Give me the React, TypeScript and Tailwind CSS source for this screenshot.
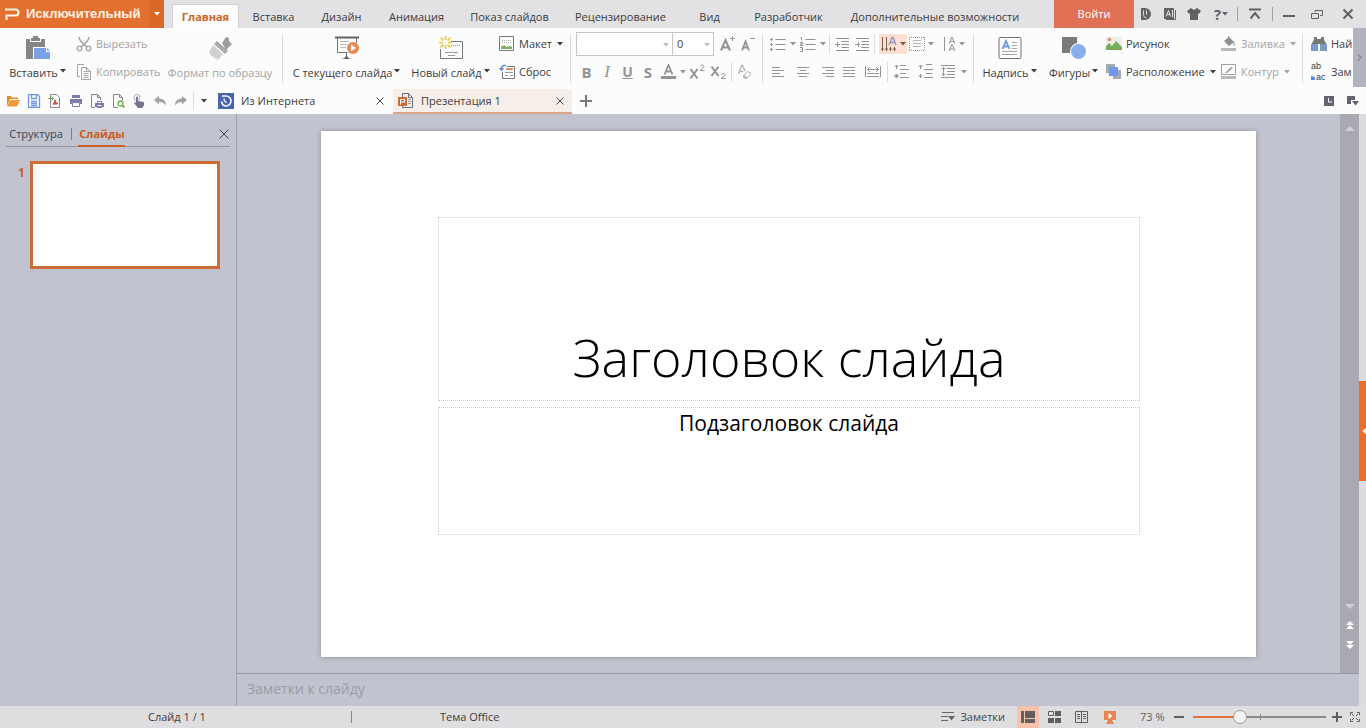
import type { ReactNode } from "react";
import clsx from "clsx";

const menuTabs = [
  { label: "Вставка", width: "w-[68px]" },
  { label: "Дизайн", width: "w-[68px]" },
  { label: "Анимация", width: "w-[82px]" },
  { label: "Показ слайдов", width: "w-[104px]" },
  { label: "Рецензирование", width: "w-[118px]" },
  { label: "Вид", width: "w-[60px]" },
  { label: "Разработчик", width: "w-[98px]" },
  { label: "Дополнительные возможности", width: "w-[195px]" },
];

function Svg({ w = 16, h = 16, children, className }: { w?: number; h?: number; children: ReactNode; className?: string }) {
  return (
    <svg width={w} height={h} viewBox={`0 0 ${w} ${h}`} fill="none" stroke="currentColor" className={clsx("shrink-0", className)} aria-hidden="true">
      {children}
    </svg>
  );
}

function Caret({ className }: { className?: string }) {
  return (
    <Svg w={8} h={4} className={className}>
      <path d="M1 0h6L4 3.5z" fill="currentColor" stroke="none" />
    </Svg>
  );
}

function Sep({ className }: { className?: string }) {
  return <span className={clsx("w-px shrink-0", className)} />;
}

function Tool({ label, width, caret, className, children }: { label: string; width: string; caret?: boolean; className?: string; children: ReactNode }) {
  return (
    <button aria-label={label} title={label} className={clsx("flex h-5 shrink-0 items-center", className ?? "text-[#939393]")}>
      <span className={clsx("flex justify-center", width)}>{children}</span>
      {caret && <Caret />}
    </button>
  );
}

function BigButton({ label, width, caret, muted, children }: { label: string; width: string; caret?: boolean; muted?: boolean; children: ReactNode }) {
  return (
    <button className={clsx("flex shrink-0 flex-col items-center", width, muted && "text-[#a3a3a3]")}>
      <span className="flex h-[31px] items-end pb-px">{children}</span>
      <span className="flex h-6 items-center gap-px whitespace-nowrap">
        {label}
        {caret && <Caret className="mb-1" />}
      </span>
    </button>
  );
}

function SmallButton({ label, caret, muted, children }: { label: string; caret?: boolean; muted?: boolean; children: ReactNode }) {
  return (
    <button className={clsx("flex h-7 items-center gap-1 whitespace-nowrap", muted && "text-[#a3a3a3]")}>
      {children}
      <span>{label}</span>
      {caret && <Caret />}
    </button>
  );
}

function Lines({ rows }: { rows: [number, number][] }) {
  return (
    <Svg w={14} h={14}>
      {rows.map(([x, len], i) => (
        <path key={i} d={`M${x} ${i * 3 + 2.5}h${len}`} />
      ))}
    </Svg>
  );
}

function TitleBar() {
  return (
    <header className="flex h-7 shrink-0 bg-[#e2e2e4]">
      <button className="flex w-[150px] shrink-0 items-center gap-[6px] bg-[#e3702f] pl-[5px] font-['Liberation_Sans',sans-serif] text-[13px] font-bold text-[#fff3e6]">
        <Svg w={15} h={14}>
          <path d="M0 2.5h10.5a3 3 0 0 1 0 6H1.5V13" strokeWidth="2.2" />
        </Svg>
        Исключительный
      </button>
      <button aria-label="Меню приложения" className="flex w-[14px] shrink-0 items-center justify-center bg-[#d9682a] text-white">
        <Caret />
      </button>
      <nav className="flex grow items-end pl-2">
        <button className="h-6 w-[67px] border border-b-0 border-[#cfcfcf] bg-[#fdfdfd] font-bold text-[#cf6226]">Главная</button>
        {menuTabs.map((tab) => (
          <button key={tab.label} className={clsx("h-6 shrink-0 pt-px pl-px whitespace-nowrap", tab.width)}>
            {tab.label}
          </button>
        ))}
      </nav>
      <button className="w-20 shrink-0 bg-[#e07155] text-white">Войти</button>
      <div className="flex shrink-0 items-center text-[#626262]">
        <button aria-label="Docer" className="flex w-6 justify-center">
          <Svg w={12} h={12}>
            <path d="M1 0h4a6 6 0 0 1 0 12H1z" fill="currentColor" stroke="none" />
            <path d="M3.500 2.500v4c0 2 1 3 3 3.500M6.500 2.500v4" stroke="#e2e2e4" />
          </Svg>
        </button>
        <button aria-label="Шрифты" className="flex w-6 justify-center">
          <Svg w={12} h={12}>
            <path d="M0 0h10v11H0z" fill="currentColor" stroke="none" />
            <path d="M11.5 2v9.5H2" />
            <path d="M2 8.500 4.500 2.500l2 6M3 6.500h3M8.500 2v7" stroke="#e2e2e4" />
          </Svg>
        </button>
        <button aria-label="Оформление" className="flex w-6 justify-center">
          <Svg w={14} h={12}>
            <path d="M4 0 7 2l3-2 4 3-2 3-1-1v7H3V5L2 6 0 3z" fill="currentColor" stroke="none" />
          </Svg>
        </button>
        <button aria-label="Справка" className="flex w-[31px] items-center justify-center">
          <span className="text-[15px] font-bold">?</span>
          <Caret />
        </button>
        <Sep className="h-[14px] bg-[#a2a2a2]" />
        <button aria-label="Скрыть ленту" className="flex w-[34px] justify-center">
          <Svg w={12} h={12}>
            <path d="M0 1.500h12M1.500 10.500 6 5l4.500 5.500" strokeWidth="2" />
          </Svg>
        </button>
        <Sep className="h-[14px] bg-[#a2a2a2]" />
        <button aria-label="Свернуть" className="flex w-8 justify-center">
          <Svg w={12} h={12}>
            <path d="M0 8h12" strokeWidth="2" />
          </Svg>
        </button>
        <button aria-label="Восстановить" className="flex w-6 justify-center">
          <Svg w={12} h={12}>
            <path d="M.5 5.500h7v5h-7zM4 4V2.500h7.500v5H9" />
          </Svg>
        </button>
        <button aria-label="Закрыть" className="flex w-[37px] justify-center">
          <Svg w={12} h={12}>
            <path d="m1.500 1.500 9 9m0-9-9 9" strokeWidth="2" />
          </Svg>
        </button>
      </div>
    </header>
  );
}

function ClipboardGroup() {
  return (
    <>
      <BigButton label="Вставить" width="w-[76px]" caret>
        <Svg w={26} h={24}>
          <path d="M1 3h4v3h11V3h4v20H1z" fill="#858585" stroke="none" />
          <path d="M6 2h2V0h5v2h2v3H6z" fill="#858585" stroke="none" />
          <path d="M8 11h14l4 4v9H8z" fill="#fff" stroke="none" />
          <path d="M9 12h12v4h4v7H9z" fill="#7ba0e8" stroke="none" />
          <path d="m22 12 3 3h-3z" fill="#7ba0e8" stroke="none" />
        </Svg>
      </BigButton>
      <div className="w-[86px] shrink-0">
        <SmallButton label="Вырезать" muted>
          <Svg w={16} h={16}>
            <path d="M3 1c0 4 4 7 8 10M13 1c0 4-4 7-8 10" strokeWidth="1.500" />
            <circle cx="3.500" cy="12.500" r="2.300" strokeWidth="1.300" />
            <circle cx="12.500" cy="12.500" r="2.300" strokeWidth="1.300" />
          </Svg>
        </SmallButton>
        <SmallButton label="Копировать" muted>
          <Svg w={16} h={16}>
            <path d="M4 12.500H1.500v-12H8M5.500 3.500h5l4 4v8h-9zM10.500 3.500v4h4M7.500 9.500h5M7.500 11.500h5M7.500 13.500h5M7.500 7.500h2" />
          </Svg>
        </SmallButton>
      </div>
      <BigButton label="Формат по образцу" width="w-[116px]" muted>
        <Svg w={24} h={23}>
          <path d="m9 4 11 10-3 3L6 7z" fill="#a9a9a9" stroke="none" />
          <path d="m14 6 4-6 3 1v3l3 3-6 6z" fill="#9d9d9d" stroke="none" />
          <path d="m5 8 10 9-5 6-2-2-1 1-2-3-1 1-3-5z" fill="#d0d0d0" stroke="none" />
        </Svg>
      </BigButton>
      <Sep className="my-1 mr-[3px] ml-1 bg-[#dcdcdc]" />
    </>
  );
}

function SlidesGroup() {
  return (
    <>
      <BigButton label="С текущего слайда" width="w-[122px]" caret>
        <Svg w={26} h={24}>
          <path d="M1 1.500h24" stroke="#626262" strokeWidth="2" />
          <path d="M3.500 2v14.500h10M22.500 2v5M12.500 17v3" stroke="#707070" />
          <path d="M6 5.500h9M6 8.500h7M6 11.500h6" stroke="#b9b9b9" />
          <path d="M7 23c4 0 5-3 5.500-5 .5 2 1.500 5 5.500 5z" fill="#626262" stroke="none" />
          <circle cx="19" cy="12" r="6" fill="#e28b57" stroke="none" />
          <path d="m17 8.500 5 3.500-5 3.500z" fill="#fff" stroke="none" />
        </Svg>
      </BigButton>
      <BigButton label="Новый слайд" width="w-[86px]" caret>
        <Svg w={26} h={24}>
          <path d="M13 5.500h11.500v17h-22V13" stroke="#777" />
          <path d="M13 9.500h9" stroke="#999" strokeDasharray="1 1" />
          <path d="M7 16.500h13M10 19.500h7" stroke="#999" />
          <path d="M7.500 0v4M7.500 9v4M1 6.500h4M10 6.500h4M2.500 1.500l3 3M9.500 8.500l3 3M12.500 1.500l-3 3M5.500 8.500l-3 3" stroke="#e5c93b" strokeWidth="1.600" />
        </Svg>
      </BigButton>
      <div className="w-[76px] shrink-0 pl-[5px]">
        <SmallButton label="Макет" caret>
          <Svg>
            <path d="M.5.500h14v14H.5z" stroke="#777" />
            <path d="M3 4.500h9M3 6.500h9" stroke="#aaa" strokeDasharray="1 1" />
            <path d="M2 13V11l3-2 3 2 3-1 2 1v2z" fill="#7eae66" stroke="none" />
          </Svg>
        </SmallButton>
        <SmallButton label="Сброс">
          <Svg>
            <path d="M8 2.500h7.500v12h-12V8" stroke="#777" />
            <path d="M7 5h7" stroke="#df9265" strokeWidth="2" />
            <path d="M6 8.500h8M6 11.500h3M11 11.500h3" stroke="#999" />
            <path d="M7 1.500H5a2.500 2.500 0 0 0-2.500 2.500v2" stroke="#5f88d8" strokeWidth="1.500" />
            <path d="M0 4h5L2.500 7.500z" fill="#5f88d8" stroke="none" />
          </Svg>
        </SmallButton>
      </div>
      <Sep className="my-1 bg-[#dcdcdc]" />
    </>
  );
}

function FontGroup() {
  return (
    <div className="w-[191px] shrink-0 pl-[5px]">
      <div className="flex h-7 items-center text-[#939393]">
        <div className="relative">
          <select aria-label="Шрифт" className="block h-6 w-[97px] appearance-none border border-[#c6c6c6] bg-white pl-1 text-[#444]">
            <option></option>
          </select>
          <Caret className="pointer-events-none absolute top-[11px] right-[3px] text-[#bdbdbd]" />
        </div>
        <div className="relative">
          <select aria-label="Размер шрифта" className="block h-6 w-[41px] appearance-none border border-l-0 border-[#c6c6c6] bg-white pl-1 text-[#444]">
            <option>0</option>
          </select>
          <Caret className="pointer-events-none absolute top-[11px] right-[3px] text-[#bdbdbd]" />
        </div>
        <Tool label="Увеличить шрифт" width="w-5" className="ml-1">
          <Svg w={18} h={18}>
            <path d="M2 15.500 6.500 5 11 15.500M3.500 12.500h6" strokeWidth="2" />
            <path d="M13.500 1v5M11 3.500h5" />
          </Svg>
        </Tool>
        <Tool label="Уменьшить шрифт" width="w-5">
          <Svg w={16} h={18}>
            <path d="M2 15.500 5.500 6.500 9 15.500M3 12.500h5" strokeWidth="1.800" />
            <path d="M10 3.500h5" />
          </Svg>
        </Tool>
      </div>
      <div className="flex h-7 items-center">
        <Tool label="Полужирный" width="w-[21px]">
          <span className="text-[15px] font-bold">B</span>
        </Tool>
        <Tool label="Курсив" width="w-5">
          <span className="font-['Liberation_Serif',serif] text-[17px] italic">I</span>
        </Tool>
        <Tool label="Подчёркнутый" width="w-[21px]">
          <span className="text-sm font-bold underline">U</span>
        </Tool>
        <Tool label="Тень" width="w-5">
          <span className="text-[15px] font-bold">S</span>
        </Tool>
        <Tool label="Цвет шрифта" width="w-[21px]" caret>
          <Svg w={15} h={16}>
            <path d="M3.500 10.500 7.500 1l4 9.500M4.500 7.500h6" strokeWidth="1.800" />
            <path d="M0 13.500h15" strokeWidth="3" />
          </Svg>
        </Tool>
        <Tool label="Надстрочный" width="w-[21px]">
          <Svg w={17} h={16}>
            <path d="m1.500 5 7 9.500m0-9.500-7 9.500" strokeWidth="2" />
            <path d="M11.500 2.500c0-2 3.500-2 3.500 0 0 1.500-3.500 2-3.500 4h4" />
          </Svg>
        </Tool>
        <Tool label="Подстрочный" width="w-[21px]">
          <Svg w={17} h={16}>
            <path d="m1.500 2.500 7 9.500m0-9.500-7 9.500" strokeWidth="2" />
            <path d="M11.500 11c0-2 3.500-2 3.500 0 0 1.500-3.500 1.500-3.500 3.500h4" />
          </Svg>
        </Tool>
        <Sep className="mx-[2px] h-5 bg-[#dcdcdc]" />
        <Tool label="Очистить формат" width="w-5" className="text-[#b4b4b4]">
          <Svg w={15} h={16}>
            <path d="M1.500 10 4.500 1.500h1L8 7M2.500 7.500h4" strokeWidth="1.400" />
            <path d="m6.500 11.500 4-4 3 1.500v2l-4 3.500-3-1z" />
            <path d="m6.500 11.500 3 1.500v1.500l-3-1z" fill="currentColor" />
          </Svg>
        </Tool>
      </div>
    </div>
  );
}

function ParagraphGroup() {
  return (
    <>
      <Sep className="my-1 bg-[#dcdcdc]" />
      <div className="w-[210px] shrink-0 pl-1">
        <div className="flex h-7 items-center">
          <Tool label="Маркеры" width="w-[22px]" caret>
            <Svg>
              <path d="M5.500 3.500h10M5.500 8.500h10M5.500 13.500h10" />
              <path d="M0 3.500h3M1.500 2v3M0 8.500h3M1.500 7v3M0 13.500h3M1.500 12v3" />
            </Svg>
          </Tool>
          <Tool label="Нумерация" width="w-[22px]" caret>
            <Svg>
              <path d="M5.500 3.500h10M5.500 8.500h10M5.500 13.500h10" />
              <path d="M.5 1.500h1v3M0 6.500h2.500v1.500H.5v1.500H3M0 11.500h2.500v4H0M1 13.500h1" />
            </Svg>
          </Tool>
          <Sep className="mx-[2px] h-5 bg-[#dcdcdc]" />
          <Tool label="Уменьшить отступ" width="w-5">
            <Svg w={14} h={14}>
              <path d="M1 1.500h13M6.500 4.500H14M6.500 7.500H14M6.500 10.500H14M1 13.500h13M0 7.500h5M2.500 5v5" />
            </Svg>
          </Tool>
          <Tool label="Увеличить отступ" width="w-5">
            <Svg w={14} h={14}>
              <path d="M1 1.500h13M6.500 4.500H14M6.500 7.500H14M6.500 10.500H14M1 13.500h13M0 7.500h5M3.500 5v5" />
            </Svg>
          </Tool>
          <Sep className="mr-1 ml-[2px] h-5 bg-[#dcdcdc]" />
          <Tool label="Направление текста" width="w-5" caret className="bg-[#fbdfd0] text-[#7a5d50]">
            <Svg w={16} h={16}>
              <path d="M1.500 1v14M5.500 1v14M9.500 11v4M13.500 11v4M0 13h3M4 13h3M8 13h3M12 13h3" />
              <path d="M8 9 11 1.500h1L15 9M9 6.500h5" stroke="#8c93c9" strokeWidth="1.300" />
            </Svg>
          </Tool>
          <Tool label="Колонки" width="w-5" caret>
            <Svg>
              <path d="M0 1.500h16M0 14.500h16M.5 1v14M15.500 1v14" strokeDasharray="1 1" />
              <path d="M4 4.500h8M4 7.500h8M4 10.500h8" stroke="#b5b5b5" />
            </Svg>
          </Tool>
          <Sep className="ml-[6px] h-5" />
          <Tool label="Межзнаковый интервал" width="w-4" caret>
            <Svg w={12} h={16}>
              <path d="M.5 1v14M5 7.500 8 1l3 6.500M6 5.500h4M5 15 8 8.500l3 6.500M6 13h4" />
            </Svg>
          </Tool>
        </div>
        <div className="flex h-7 items-center">
          <Tool label="По левому краю" width="w-[22px]">
            <Lines rows={[[1, 8], [1, 12], [1, 8], [1, 12]]} />
          </Tool>
          <Tool label="По центру" width="w-7">
            <Lines rows={[[1, 12], [4, 6], [1, 12], [3, 8]]} />
          </Tool>
          <Tool label="По правому краю" width="w-[22px]">
            <Lines rows={[[1, 12], [5, 8], [1, 12], [5, 8]]} />
          </Tool>
          <Tool label="По ширине" width="w-5">
            <Lines rows={[[1, 12], [1, 12], [1, 12], [1, 12]]} />
          </Tool>
          <Tool label="Распределить" width="w-7">
            <Svg>
              <path d="M.5 2v11M15.500 2v11M2 5.500h12M5 3 2.500 5.500 5 8M11 3l2.500 2.500L11 8M2 9.500h12M2 12.500h12" />
            </Svg>
          </Tool>
          <Sep className="h-5 bg-[#dcdcdc]" />
          <Tool label="Интервал перед" width="w-7">
            <Svg>
              <path d="M6 1.500h6M6 5.500h9M6 9.500h6M6 13.500h9M2.500 1v4M.5 3l2-2 2 2M2.500 10v4M.5 12h4M2.500 10l-2 2 2 2 2-2z" />
            </Svg>
          </Tool>
          <Tool label="Интервал после" width="w-5">
            <Svg>
              <path d="M8 .5h6M6 5.500h9M8 9.500h6M6 13.500h9M2.500 1v4M.5 3l2-2 2 2M2.500 10v4M.5 12h4" />
            </Svg>
          </Tool>
          <Tool label="Междустрочный интервал" width="w-6" caret>
            <Svg>
              <path d="M1 1.500h14M7 4.500h8M7 7.500h8M7 10.500h8M1 13.500h14M3.500 3v9M1.500 5.500l2-2 2 2M1.500 9.500l2 2 2-2" />
            </Svg>
          </Tool>
        </div>
      </div>
      <Sep className="my-1 bg-[#dcdcdc]" />
    </>
  );
}

function DrawingGroup() {
  return (
    <>
      <BigButton label="Надпись" width="w-[72px]" caret>
        <Svg w={24} h={23}>
          <rect x="1" y=".5" width="22" height="21" rx="1" stroke="#707070" />
          <path d="M4.500 12 8 4l3.500 8M5.500 9.500h5" stroke="#6f97df" strokeWidth="1.800" />
          <path d="M14 5.500h5M14 8.500h5M14 11.500h5M4 14.500h15M4 17.500h15" stroke="#a5a5a5" />
        </Svg>
      </BigButton>
      <BigButton label="Фигуры" width="w-[56px]" caret>
        <Svg w={26} h={23}>
          <path d="M1 0h15v16H1z" fill="#7a7a7a" stroke="none" />
          <circle cx="17.500" cy="14.500" r="8.500" fill="#fff" stroke="none" />
          <circle cx="17.500" cy="14.500" r="7.500" fill="#8aaeea" stroke="none" />
        </Svg>
      </BigButton>
      <div className="w-[119px] shrink-0 pl-1">
        <SmallButton label="Рисунок">
          <Svg>
            <path d="M0 1h16v12H0z" fill="#ececec" stroke="none" />
            <circle cx="3.500" cy="3.500" r="1.700" fill="#df9265" stroke="none" />
            <path d="M0 14v-4l3-3 3 3 4-5 6 6v3z" fill="#76ad57" stroke="none" />
          </Svg>
        </SmallButton>
        <SmallButton label="Расположение" caret>
          <Svg>
            <path d="M0 0h9v3H3v6H0z" fill="#a4aab4" stroke="none" />
            <path d="M15 15H7v-3h5V6h3z" fill="#a4aab4" stroke="none" />
            <path d="M3 3h9v9H3z" fill="#6f97ee" stroke="none" />
          </Svg>
        </SmallButton>
      </div>
      <div className="w-[81px] shrink-0">
        <SmallButton label="Заливка" caret muted>
          <Svg>
            <path d="M0 12h15v3H0z" fill="#b9b9b9" stroke="none" />
            <path d="m3 5 5-4 5 5-5 4z" fill="#8d8d8d" stroke="none" />
            <path d="M7.500 0v4M13 6v4" stroke="#8d8d8d" />
          </Svg>
        </SmallButton>
        <SmallButton label="Контур" caret muted>
          <Svg>
            <path d="M.5.500h14v10H.5z" stroke="#a0a0a0" />
            <path d="m4 9 6-6 2 1-6 5z" fill="#a0a0a0" stroke="none" />
            <path d="M0 12h15v3H0z" fill="#b9b9b9" stroke="none" />
          </Svg>
        </SmallButton>
      </div>
      <Sep className="my-1 bg-[#dcdcdc]" />
    </>
  );
}

function Ribbon() {
  return (
    <div className="flex h-[59px] shrink-0 bg-[#fcfcfc]">
      <div className="flex min-w-0 grow overflow-hidden pt-[2px]">
        <ClipboardGroup />
        <SlidesGroup />
        <FontGroup />
        <ParagraphGroup />
        <DrawingGroup />
        <div className="shrink-0 pl-2">
          <SmallButton label="Най">
            <Svg>
              <path d="M3 1h3v2h4V1h3v3l2 3v1H1V7l2-3z" fill="#777" stroke="none" />
              <path d="M0 8h7v7H0zM9 8h7v7H9z" fill="#7b9ac6" stroke="none" />
            </Svg>
          </SmallButton>
          <SmallButton label="Зам">
            <span className="flex w-4 flex-col font-['Liberation_Sans',sans-serif] text-[9px] leading-[11px]">
              <span className="text-left">ab</span>
              <span className="flex items-center gap-px">
                <Svg w={4} h={4}>
                  <path d="m0 0 4 1v3H0z" fill="#5f88d8" stroke="none" />
                </Svg>
                ac
              </span>
            </span>
          </SmallButton>
        </div>
      </div>
      <button aria-label="Прокрутить ленту" className="flex w-[13px] shrink-0 items-center justify-center bg-[#b1b4be] text-[#626262]">
        <Svg w={5} h={7}>
          <path d="m1 .5 3 3-3 3" />
        </Svg>
      </button>
    </div>
  );
}

function CloseMark({ size = 8 }: { size?: number }) {
  return (
    <Svg w={size} h={size} className="text-[#444]">
      <path d={`M.5.500l${size - 1} ${size - 1}M${size - 0.5}.5l-${size - 1} ${size - 1}`} />
    </Svg>
  );
}

const page = "M2.500.500h6l3 3v10h-9z";

const quickActions: { label: string; icon: ReactNode }[] = [
  {
    label: "Открыть",
    icon: (
      <>
        <path d="M1 12V2h4l1 1.500h6V5H4z" fill="#e58a2f" stroke="none" />
        <path d="M4 6h10l-3 6.500H1z" fill="#f09a38" stroke="none" />
      </>
    ),
  },
  {
    label: "Сохранить",
    icon: <path d="M1.500.500h9l2 2v11h-11zM4.500 1v3.500h5V1M4 7.500h6M4 9.500h6M4 11.500h6" stroke="#6f97df" strokeWidth="1.300" />,
  },
  {
    label: "Экспорт в PDF",
    icon: (
      <>
        <path d={page} stroke="#888" />
        <path d="M5 10.500c2-2 2-4 2-5 0 2 1 4 3 4-2 0-4 0-5 1z" stroke="#d0524a" strokeWidth="1.300" />
        <path d="M0 4.500h5M3.500 2.500l2 2-2 2" stroke="#76ad57" />
      </>
    ),
  },
  {
    label: "Печать",
    icon: (
      <>
        <path d="M3 1h8v3H3zM1 5h12v5h-2V8H3v2H1z" fill="#7d7ba8" stroke="none" />
        <path d="M3.500 8.500h7v4h-7z" stroke="#7d7ba8" />
      </>
    ),
  },
  {
    label: "Параметры печати",
    icon: (
      <>
        <path d="M5 13.500H1.500v-13h6l3 3V6M7.500.500v3h3" stroke="#888" />
        <path d="M7 7h5v2h2v4h-2v1H7v-1H5V9h2z" fill="#7d7ba8" stroke="none" />
        <path d="M7.500 11.500h4M8 8.500h3" stroke="#fff" />
      </>
    ),
  },
  {
    label: "Просмотр",
    icon: (
      <>
        <path d="M7 13.500H2.500v-13h6l3 3V6M8.500.500v3h3" stroke="#888" />
        <circle cx="9.500" cy="9.500" r="2.500" stroke="#76ad57" strokeWidth="1.300" />
        <path d="m11.500 11.500 2 2" stroke="#76ad57" strokeWidth="1.800" />
      </>
    ),
  },
  {
    label: "Сенсорный режим",
    icon: (
      <>
        <circle cx="5" cy="3.500" r="3" stroke="#a8aac4" />
        <path d="M4 3.500c0-1.500 2-1.500 2 0V7l6 1v3l-1.500 3H6L2 9l1-1 1 1z" fill="#74758f" stroke="none" />
      </>
    ),
  },
  {
    label: "Отменить",
    icon: <path d="M1 6 6 2v2.500c4 0 7 2 7 7-2-3-4-3.500-7-3.500v2.500z" fill="#a2a2a2" stroke="none" />,
  },
  {
    label: "Повторить",
    icon: <path d="M13 6 8 2v2.500c-4 0-7 2-7 7 2-3 4-3.500 7-3.500v2.500z" fill="#a2a2a2" stroke="none" />,
  },
];

function QuickBar() {
  return (
    <div className="flex h-[27px] shrink-0 bg-[#fcfcfc]">
      <div className="flex items-center pl-[2px]">
        {quickActions.map((action) => (
          <button key={action.label} aria-label={action.label} title={action.label} className="flex w-[21px] justify-center">
            <Svg w={14} h={14}>{action.icon}</Svg>
          </button>
        ))}
        <Sep className="ml-[2px] h-[18px] bg-[#dcdcdc]" />
        <button aria-label="Настроить панель" className="flex w-5 justify-center">
          <Caret />
        </button>
      </div>
      <div className="flex w-[179px] items-center pl-1">
        <button className="flex grow items-center gap-[7px]">
          <Svg className="text-white">
            <path d="M0 0h16v16H0z" fill="#4764ae" stroke="none" />
            <path d="M4 3h4a5 5 0 0 1 0 10C5.500 13 4 11 3.500 8.500" strokeWidth="1.600" />
            <path d="M6 5.500c0 2 1 3.500 3 4" strokeWidth="1.200" />
          </Svg>
          Из Интернета
        </button>
        <button aria-label="Закрыть вкладку Из Интернета" className="flex w-[26px] justify-center">
          <CloseMark />
        </button>
      </div>
      <div className="mt-[2px] flex w-[179px] items-center border-b-2 border-[#dba585] bg-[#f6eee9] pl-[5px]">
        <button className="flex grow items-center gap-[7px]">
          <Svg>
            <path d="M4.500 4V.500h6l4 4v10h-10V13M10.500.500v4h4" stroke="#666e80" />
            <path d="M10 6.500h3M10 8.500h3M10 10.500h3" stroke="#999" />
            <path d="M0 4h9v9H0z" fill="#cf6b35" stroke="none" />
            <path d="M2.500 11.500v-5h4v2.500h-4" stroke="#fff" />
          </Svg>
          Презентация 1
        </button>
        <button aria-label="Закрыть вкладку Презентация 1" className="flex w-[25px] justify-center">
          <CloseMark />
        </button>
      </div>
      <button aria-label="Новая вкладка" className="flex w-7 items-center justify-center text-[#777]">
        <Svg w={12} h={12}>
          <path d="M6 0v12M0 6h12" strokeWidth="2" />
        </Svg>
      </button>
      <div className="ml-auto flex items-center pr-px text-[#62656f]">
        <button aria-label="История" className="flex w-6 justify-center">
          <Svg w={10} h={10}>
            <path d="M0 0h10v10H0z" fill="currentColor" stroke="none" />
            <path d="M4.500 2v4H8" stroke="#fff" />
          </Svg>
        </button>
        <button aria-label="Список вкладок" className="flex w-6 justify-center">
          <Svg w={12} h={10}>
            <path d="M0 0h8v4H4v4H0z" fill="currentColor" stroke="none" />
            <path d="M5 5h7L8.500 9.500z" fill="currentColor" stroke="none" />
          </Svg>
        </button>
      </div>
    </div>
  );
}

function SlidePanel() {
  return (
    <aside className="w-[237px] shrink-0 border-r border-[#9da1ae] px-[6px] pt-2">
      <div className="flex h-[25px] items-stretch border-b border-[#9297a4]">
        <button className="w-[65px] pr-[5px] text-[#3f4350]">Структура</button>
        <Sep className="my-[6px] bg-[#7f8390]" />
        <button className="-mb-px ml-[6px] w-[47px] border-b-2 border-[#cb6126] pt-px pl-px font-bold text-[#cb5c22]">Слайды</button>
        <button aria-label="Закрыть панель" className="mr-px ml-auto">
          <CloseMark size={10} />
        </button>
      </div>
      <div className="mt-[14px] flex">
        <span className="w-6 pt-1 pl-3 text-xs font-bold text-[#cb6126]">1</span>
        <button aria-label="Слайд 1" className="h-[108px] w-[190px] border-3 border-[#cb6c38] bg-white" />
      </div>
    </aside>
  );
}

function ScrollBar() {
  return (
    <div className="flex w-[19px] shrink-0 flex-col items-center bg-[#a9aab1] pt-3 pb-6 text-white">
      <button aria-label="Вверх">
        <Svg w={10} h={5} className="text-[#cfd0d5]">
          <path d="M0 5 5 0l5 5z" fill="currentColor" stroke="none" />
        </Svg>
      </button>
      <div className="flex grow flex-col items-center justify-end gap-3">
        <button aria-label="Вниз">
          <Svg w={10} h={5} className="text-[#cfd0d5]">
            <path d="m0 0 5 5 5-5z" fill="currentColor" stroke="none" />
          </Svg>
        </button>
        <button aria-label="Предыдущий слайд">
          <Svg w={8} h={8}>
            <path d="m0 4 4-4 4 4zM0 8l4-4 4 4z" fill="currentColor" stroke="none" />
          </Svg>
        </button>
        <button aria-label="Следующий слайд">
          <Svg w={8} h={8}>
            <path d="m0 0 4 4 4-4zM0 4l4 4 4-4z" fill="currentColor" stroke="none" />
          </Svg>
        </button>
      </div>
    </div>
  );
}

function Workspace() {
  return (
    <main className="flex min-w-0 grow flex-col">
      <div className="flex grow">
        <div className="flex grow px-[84px] pt-[17px] pb-4">
          <section className="grow bg-white pt-[86px] pr-[116px] pl-[117px] text-center text-black shadow-[0_0_5px_#8d909b]">
            <h1 className="flex h-[184px] items-end justify-center border border-dotted border-[#cfcfcf] pb-[10px] text-[52px] leading-[66px] font-light">
              Заголовок слайда
            </h1>
            <p className="mt-[6px] h-32 border border-dotted border-[#cfcfcf] text-[21px] leading-[30px]">Подзаголовок слайда</p>
          </section>
        </div>
        <ScrollBar />
      </div>
      <div className="h-[33px] shrink-0 border-t border-[#9297a4] px-[10px]">
        <input aria-label="Заметки к слайду" placeholder="Заметки к слайду" className="h-7 w-full text-sm outline-none placeholder:text-[#989ca8]" />
      </div>
    </main>
  );
}

function StatusBar() {
  return (
    <footer className="flex h-[22px] shrink-0 items-center bg-[#dedee0]">
      <span className="w-[351px] pl-[148px]">Слайд 1 / 1</span>
      <Sep className="h-3 bg-[#8a8a8a]" />
      <span className="pl-[88px]">Тема Office</span>
      <div className="ml-auto flex h-full items-center text-[#5f5f5f]">
        <button className="flex items-center gap-[5px] pr-3 text-[#444]">
          <Svg w={14} h={10} className="text-[#666]">
            <path d="M1 .5h12M0 4.500h7M0 8.500h7" />
            <path d="M7 4h7l-3.500 4.500z" fill="currentColor" stroke="none" />
          </Svg>
          Заметки
        </button>
        <button aria-label="Обычный" className="flex h-full w-[22px] items-center justify-center bg-[#f7c3ad]">
          <Svg w={14} h={12}>
            <path d="M0 0h3v12H0zM4 0h10v7H4zM4 8h10v4H4z" fill="currentColor" stroke="none" />
          </Svg>
        </button>
        <button aria-label="Сортировщик" className="flex w-8 justify-center">
          <Svg w={14} h={12}>
            <path d="M.5.500h5v4h-5z" />
            <path d="M7 0h6v5H7zM0 7h6v5H0zM7 7h6v5H7z" fill="currentColor" stroke="none" />
          </Svg>
        </button>
        <button aria-label="Чтение" className="flex w-[22px] justify-center">
          <Svg w={14} h={12}>
            <path d="M.5.500h12v11H.5zM6.500 1v10M2 3.500h3M2 5.500h3M2 7.500h3M8 3.500h3M8 5.500h3M8 7.500h3" />
          </Svg>
        </button>
        <button aria-label="Показ слайдов" className="flex w-[34px] justify-center">
          <Svg w={12} h={13}>
            <path d="M0 0h12v9H8l2 4H2l2-4H0z" fill="#e38852" stroke="none" />
            <path d="m4.500 2 4 3-4 3z" fill="#fff" stroke="none" />
          </Svg>
        </button>
        <span className="w-[38px] pl-[13px] whitespace-nowrap">73 %</span>
        <button aria-label="Уменьшить" className="flex w-7 justify-center">
          <Svg w={10} h={10}>
            <path d="M0 5h10" strokeWidth="2" />
          </Svg>
        </button>
        <div className="relative flex items-center">
          <span className="absolute left-1/2 h-[6px] w-px bg-[#8a8a8a]" />
          <input
            type="range"
            aria-label="Масштаб"
            min={0}
            max={100}
            defaultValue={34}
            className="relative h-[14px] w-[133px] appearance-none bg-transparent [&::-webkit-slider-runnable-track]:h-[2px] [&::-webkit-slider-runnable-track]:bg-linear-to-r [&::-webkit-slider-runnable-track]:from-[#e0733f] [&::-webkit-slider-runnable-track]:from-36% [&::-webkit-slider-runnable-track]:to-[#8a8a8a] [&::-webkit-slider-runnable-track]:to-36% [&::-webkit-slider-thumb]:mt-[-6px] [&::-webkit-slider-thumb]:size-[14px] [&::-webkit-slider-thumb]:appearance-none [&::-webkit-slider-thumb]:rounded-full [&::-webkit-slider-thumb]:border [&::-webkit-slider-thumb]:border-[#999] [&::-webkit-slider-thumb]:bg-[#f4f4f4]"
          />
        </div>
        <button aria-label="Увеличить" className="flex w-[22px] justify-center">
          <Svg w={10} h={10}>
            <path d="M0 5h10M5 0v10" strokeWidth="2" />
          </Svg>
        </button>
        <button aria-label="По размеру окна" className="flex w-[18px] justify-center pr-1">
          <Svg w={10} h={10}>
            <path d="M.5 3V.500H3M7 .5h2.500V3M9.500 7v2.500H7M3 9.500H.5V7M2 2l2 2M8 2 6 4M2 8l2-2M8 8 6 6" />
          </Svg>
        </button>
      </div>
    </footer>
  );
}

export default function App() {
  return (
    <div className="flex min-h-screen flex-col overflow-hidden bg-[#c1c4ce] font-['Open_Sans','Noto_Sans',sans-serif] text-[11px] leading-4 text-[#3c3c3c]">
      <TitleBar />
      <Ribbon />
      <QuickBar />
      <div className="flex grow">
        <SlidePanel />
        <Workspace />
        <div className="flex w-[7px] shrink-0 flex-col justify-center bg-[#dcdce0]">
          <button aria-label="Открыть область задач" className="mt-[42px] flex h-[100px] items-center justify-end bg-[#e96f2a] text-[#fff0d8]">
            <Svg w={4} h={6}>
              <path d="M4 0v6L0 3z" fill="currentColor" stroke="none" />
            </Svg>
          </button>
        </div>
      </div>
      <StatusBar />
    </div>
  );
}
